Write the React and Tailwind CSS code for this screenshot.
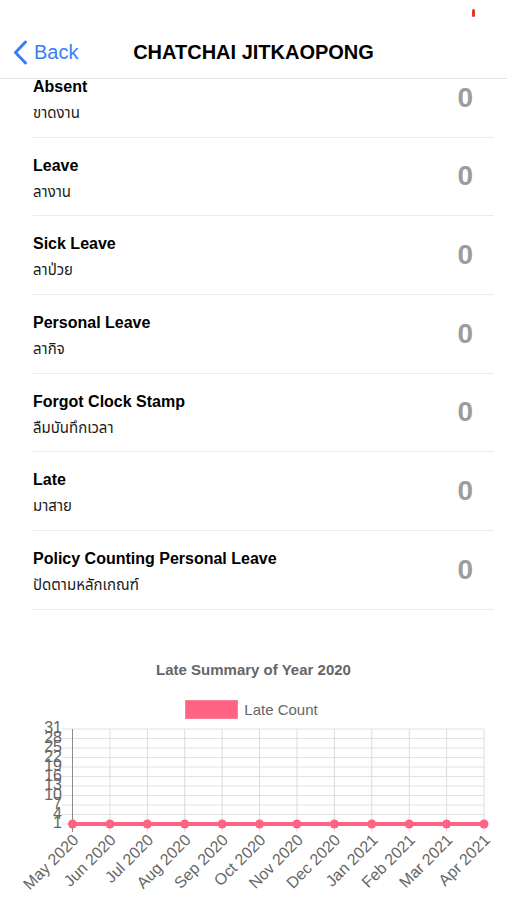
import React from "react"

const rows = [
  { en: "Absent", th: "ขาดงาน", value: 0 },
  { en: "Leave", th: "ลางาน", value: 0 },
  { en: "Sick Leave", th: "ลาป่วย", value: 0 },
  { en: "Personal Leave", th: "ลากิจ", value: 0 },
  { en: "Forgot Clock Stamp", th: "ลืมบันทึกเวลา", value: 0 },
  { en: "Late", th: "มาสาย", value: 0 },
  { en: "Policy Counting Personal Leave", th: "ปัดตามหลักเกณฑ์", value: 0 },
]

const months = [
  "May 2020", "Jun 2020", "Jul 2020", "Aug 2020", "Sep 2020", "Oct 2020",
  "Nov 2020", "Dec 2020", "Jan 2021", "Feb 2021", "Mar 2021", "Apr 2021",
]

const yTicks = [31, 28, 25, 22, 19, 16, 13, 10, 7, 4, 1]

function LateChart() {
  const left = 72.5
  const right = 484
  const top = 10
  const step = 9.5
  const bottom = top + step * 10
  const dx = (right - left) / 11

  return (
    <svg width="507" height="181" viewBox="0 0 507 181" className="block">
      {yTicks.map((t, i) => (
        <line key={"h" + t} x1={62} x2={right} y1={top + i * step} y2={top + i * step} stroke="#e2e2e2" strokeWidth="1" />
      ))}
      {months.map((m, j) => (
        <line
          key={"v" + m}
          x1={left + j * dx}
          x2={left + j * dx}
          y1={top}
          y2={bottom + 8}
          stroke={j === 0 ? "#8c8c8c" : "#dcdcdc"}
          strokeWidth="1"
        />
      ))}
      {yTicks.map((t, i) => (
        <text
          key={"yl" + t}
          x={62}
          y={top + i * step}
          textAnchor="end"
          dominantBaseline="middle"
          fontSize="16"
          fill="#666"
          fontFamily="'Liberation Sans', sans-serif"
        >
          {t}
        </text>
      ))}
      <line x1={left} x2={right} y1={bottom} y2={bottom} stroke="#ff6384" strokeWidth="4" />
      {months.map((m, j) => (
        <circle key={"p" + m} cx={left + j * dx} cy={bottom} r="4.5" fill="#ff6384" />
      ))}
      {months.map((m, j) => (
        <text
          key={"xl" + m}
          transform={`translate(${left + j * dx + 4} ${bottom + 14}) rotate(-45)`}
          textAnchor="end"
          dominantBaseline="middle"
          fontSize="16"
          fill="#666"
          fontFamily="'Liberation Sans', sans-serif"
        >
          {m}
        </text>
      ))}
    </svg>
  )
}

export default function App() {
  return (
    <div className="w-[507px] h-[900px] overflow-hidden bg-white font-['Liberation_Sans','Noto_Sans_Thai','Noto_Sans',sans-serif] text-black">
      <header className="h-[79px] border-b border-[#e4e4e4]">
        <div className="h-[26px] flex justify-end pr-[32px] pt-[9px]">
          <div className="w-[3px] h-[8px] rounded-sm bg-[#e8322f]"></div>
        </div>
        <div className="h-[52px] grid grid-cols-[1fr_auto_1fr] items-center">
          <button className="flex items-center gap-[6px] pl-[13px] text-[#3a7ef6] text-[20px]">
            <svg width="15" height="25" viewBox="0 0 15 25" fill="none">
              <path d="M12.5 2 L2.5 12.5 L12.5 23" stroke="#3a7ef6" strokeWidth="3" strokeLinecap="round" strokeLinejoin="round" />
            </svg>
            <span>Back</span>
          </button>
          <h1 className="text-[20px] font-semibold tracking-normal">CHATCHAI JITKAOPONG</h1>
          <div></div>
        </div>
      </header>

      <main className="h-[821px] overflow-hidden">
        <div className="-mt-[20px]">
          {rows.map((r) => (
            <div
              key={r.en}
              className="ml-[33px] w-[461px] h-[78.67px] border-b border-[#ebebeb] flex items-center justify-between pr-[21px]"
            >
              <div className="self-start pt-[19px]">
                <p className="text-[16px] leading-[18px] font-bold">{r.en}</p>
                <p className="mt-[7px] text-[15px] leading-[20px] text-[#1a1a1a]">{r.th}</p>
              </div>
              <span className="text-[28px] font-bold text-[#9c9c9c]">{r.value}</span>
            </div>
          ))}

          <section className="pt-[51px]">
            <h2 className="text-center text-[15px] leading-[18px] font-bold text-[#666]">Late Summary of Year 2020</h2>
            <div className="mt-[21px] flex justify-center items-center gap-[6px] pr-[4px]">
              <div className="w-[53px] h-[19px] bg-[#ff6384] border border-[#ff7f99]"></div>
              <span className="text-[15px] leading-[19px] text-[#666]">Late Count</span>
            </div>
            <LateChart />
          </section>
        </div>
      </main>
    </div>
  )
}
